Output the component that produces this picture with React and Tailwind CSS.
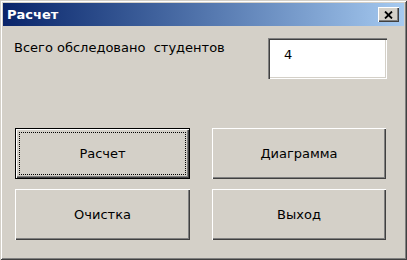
import React from "react";

const font = { fontFamily: '"DejaVu Sans", Verdana, sans-serif' };

function Btn({ children, isDefault }) {
  if (isDefault) {
    return (
      <div className="h-[51px] border border-black bg-[#d4d0c8] flex">
        <div className="flex-1 flex shadow-[inset_1px_1px_#ffffff,inset_-1px_-1px_#404040,inset_-2px_-2px_#808080,inset_2px_2px_#d4d0c8] p-[3px]">
          <div className="flex-1 border border-dotted border-black flex items-center justify-center text-[13px] text-black">
            {children}
          </div>
        </div>
      </div>
    );
  }
  return (
    <div className="h-[51px] bg-[#d4d0c8] flex items-center justify-center text-[13px] text-black shadow-[inset_1px_1px_#ffffff,inset_-1px_-1px_#404040,inset_-2px_-2px_#808080,inset_2px_2px_#d4d0c8]">
      {children}
    </div>
  );
}

export default function App() {
  return (
    <div
      style={font}
      className="w-[407px] h-[260px] bg-[#d4d0c8] flex flex-col p-[3px] shadow-[inset_1px_1px_#d4d0c8,inset_-1px_-1px_#404040,inset_2px_2px_#ffffff,inset_-2px_-2px_#808080]"
    >
      <div className="h-[23px] flex items-center pl-[4px] pr-[5px] bg-gradient-to-r from-[#0a246a] to-[#a6caf0]">
        <span className="text-white font-bold text-[13px]">Расчет</span>
        <div className="ml-auto w-[21px] h-[15px] bg-[#d4d0c8] flex items-center justify-center shadow-[inset_1px_1px_#ffffff,inset_-1px_-1px_#404040,inset_-2px_-2px_#808080]">
          <svg width="9" height="8" viewBox="0 0 9 8">
            <path d="M1 0.5 L8 7.5 M8 0.5 L1 7.5" stroke="#000" strokeWidth="1.8" />
          </svg>
        </div>
      </div>
      <div className="flex-1 flex flex-col pl-[12px] pr-[17px]">
        <div className="flex items-start mt-[12px]">
          <div className="text-[13px] text-black mt-[0px] -ml-[1px] whitespace-pre">
            Всего обследовано  студентов
          </div>
          <div className="ml-auto w-[119px] h-[41px] bg-white shadow-[inset_1px_1px_#808080,inset_2px_2px_#404040,inset_-1px_-1px_#ffffff,inset_-2px_-2px_#d4d0c8] pl-[16px] pt-[7px] text-[13px] text-black">
            4
          </div>
        </div>
        <div className="grid grid-cols-[175px_174px] gap-x-[22px] gap-y-[10px] mt-[49px]">
          <Btn isDefault>Расчет</Btn>
          <Btn>Диаграмма</Btn>
          <Btn>Очистка</Btn>
          <Btn>Выход</Btn>
        </div>
      </div>
    </div>
  );
}
